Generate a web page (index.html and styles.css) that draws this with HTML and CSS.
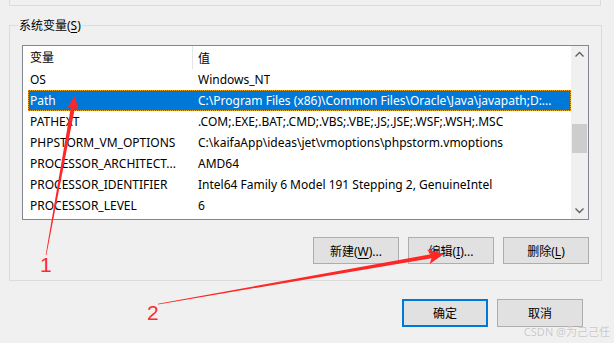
FILE: index.html
```html
<!DOCTYPE html>
<html lang="zh-CN">
<head>
  <meta charset="UTF-8">
  <meta name="viewport" content="width=device-width, initial-scale=1.0">
  <link rel="stylesheet" href="styles.css">
  <title>环境变量</title>
</head>
<body>
  <div class="prev_group"></div>

  <fieldset class="sys_group">
    <legend>系统变量(<u>S</u>)</legend>

    <div class="var_list">
      <div class="var_table">
        <div class="var_head">
          <span class="col_name">变量</span>
          <span class="col_value">值</span>
        </div>
        <ul class="var_rows">
          <li><span class="col_name">OS</span><span class="col_value">Windows_NT</span></li>
          <li class="selected"><span class="col_name">Path</span><span class="col_value">C:\Program Files (x86)\Common Files\Oracle\Java\javapath;D:...</span></li>
          <li><span class="col_name">PATHEXT</span><span class="col_value">.COM;.EXE;.BAT;.CMD;.VBS;.VBE;.JS;.JSE;.WSF;.WSH;.MSC</span></li>
          <li><span class="col_name">PHPSTORM_VM_OPTIONS</span><span class="col_value">C:\kaifaApp\ideas\jet\vmoptions\phpstorm.vmoptions</span></li>
          <li><span class="col_name">PROCESSOR_ARCHITECT...</span><span class="col_value">AMD64</span></li>
          <li><span class="col_name">PROCESSOR_IDENTIFIER</span><span class="col_value">Intel64 Family 6 Model 191 Stepping 2, GenuineIntel</span></li>
          <li><span class="col_name">PROCESSOR_LEVEL</span><span class="col_value">6</span></li>
        </ul>
      </div>
      <div class="v_scroll">
        <svg class="scroll_arrow" width="17" height="17" viewBox="0 0 17 17"><path d="M4.5 10.5 L8.5 6.5 L12.5 10.5" fill="none" stroke="#606060" stroke-width="1.4"/></svg>
        <div class="scroll_track"><div class="scroll_thumb"></div></div>
        <svg class="scroll_arrow" width="17" height="17" viewBox="0 0 17 17"><path d="M4.5 6.5 L8.5 10.5 L12.5 6.5" fill="none" stroke="#606060" stroke-width="1.4"/></svg>
      </div>
    </div>

    <div class="btn_row">
      <button class="win_btn">新建(<u>W</u>)...</button>
      <button class="win_btn">编辑(<u>I</u>)...</button>
      <button class="win_btn">删除(<u>L</u>)</button>
    </div>
  </fieldset>

  <div class="dialog_btns">
    <button class="win_btn default">确定</button>
    <button class="win_btn">取消</button>
  </div>

  <div class="watermark">CSDN @为己己任</div>

  <svg class="marks" width="614" height="343" viewBox="0 0 614 343">
    <polygon points="45.7,255 71,106.4 66.4,109 75,96 78.6,111 75,107.2 46.4,255.1" fill="#ff2626"/>
    <polygon points="158,303.8 430.9,254.2 427,249.6 444,254 429.6,264 431.5,258.2 158.1,304.4" fill="#ff2626"/>
    <text x="40" y="272" class="mark_num">1</text>
    <text x="147" y="320" class="mark_num">2</text>
  </svg>
</body>
</html>
```
FILE: styles.css
```css
html,body{
  margin:0; padding:0;
}
body{
  width:614px; height:343px; position:relative; overflow:hidden;
  background:#f0f0f0; color:#000;
  font-family:"Noto Sans", "Noto Sans CJK SC", sans-serif; font-size:12px;
}
ul,li{
  margin:0; padding:0; list-style:none;
}
u{ text-decoration:underline; text-underline-offset:2px; }

.prev_group{
  height:5px; margin:0 13px 0 9px;
  border:1px solid #dcdcdc; border-top:none;
}

/* 系统变量 group */
.sys_group{
  margin:11px 12px 0 9px; padding:11px 12px 16px 12px;
  border:1px solid #dcdcdc;
}
.sys_group legend{
  padding:0 1px; margin-left:-4px; line-height:17px;
}

.var_list{
  display:flex; height:173px;
  border:1px solid #828790; background:#fff;
}
.var_table{
  flex:1; min-width:0;
}
.var_head{
  display:flex; height:23px; align-items:center;
}
.var_head .col_name{
  border-right:1px solid #e5e5e5; height:23px; line-height:23px;
}
.col_name{
  width:162px; flex:none; padding-left:7px; white-space:nowrap;
}
.col_value{
  padding-left:5px; white-space:nowrap; overflow:hidden;
}
.var_rows li{
  display:flex; height:21px; line-height:21px; margin-left:5px;
}
.var_rows li .col_name{ width:163px; padding-left:2px; }
.var_rows li.selected{
  background:#0078d7; color:#fff;
  outline:1px dotted #f5a623; outline-offset:-1px;
}

.v_scroll{
  width:17px; flex:none; display:flex; flex-direction:column;
  background:#f0f0f0;
}
.scroll_arrow{ display:block; flex:none; }
.scroll_track{ flex:1; padding:0 1px; }
.scroll_thumb{
  margin-top:61px; height:29px; background:#cdcdcd;
}

.btn_row{
  display:flex; justify-content:flex-end; gap:9px; margin-top:17px;
}
.win_btn{
  width:86px; height:27px; padding:0;
  font:inherit; color:#000;
  background:#e1e1e1; border:1px solid #adadad;
}
.win_btn.default{
  border:2px solid #0078d7; height:28px;
}

.dialog_btns{
  display:flex; justify-content:flex-end; gap:9px;
  margin:18px 31px 0 0;
}
.dialog_btns .win_btn{ height:28px; }

.watermark{
  position:absolute; right:4px; bottom:4px;
  font-size:11px; color:#c8c8c8;
  text-shadow:0 0 1px #fff;
}

/* red annotation arrows */
.marks{
  position:absolute; left:0; top:0; pointer-events:none;
}
.mark_num{
  font-family:"Liberation Sans", sans-serif; font-size:21px; fill:#ff2a2a;
}
```
